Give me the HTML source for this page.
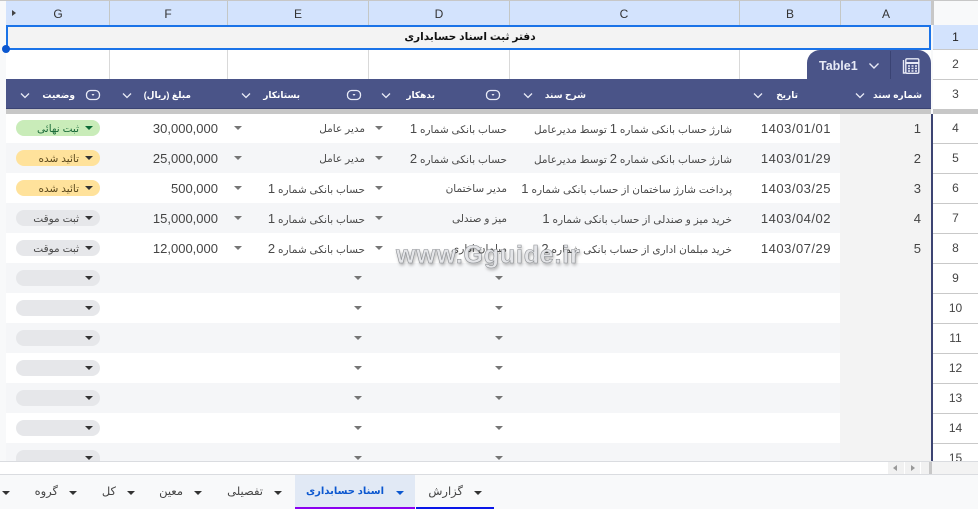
<!DOCTYPE html>
<html lang="fa"><head><meta charset="utf-8"><title>دفتر ثبت اسناد حسابداری</title>
<style>
html,body{margin:0;padding:0;background:#fff}
#p{position:relative;width:978px;height:509px;overflow:hidden;background:#fff;font-family:"Liberation Sans","DejaVu Sans",sans-serif;color:#444}
#p div,#p svg{position:absolute}
.b{left:6px;width:834px;height:30px;background:#f5f6f8}
.v{top:25px;width:1px;height:54px;background:#d9d9d9}
.hv{top:1px;width:1px;height:24px;background:#c4c7c5}
.c{top:2px;height:24px;line-height:24px;font-size:12px;color:#333;text-align:center;width:20px}
.rh{left:933px;width:45px;text-align:center;font-size:12px;line-height:20px;color:#444}
.rl{left:933px;width:45px;height:1px;background:#c9c9c9}
.t{font-size:10.5px;line-height:20px;white-space:nowrap;direction:rtl;color:#4a4a4a;margin-top:1px}
.t span{font-size:13px}
.n{font-size:13px;line-height:20px;white-space:nowrap;color:#444;margin-top:.5px}
.d{letter-spacing:.5px}
.h{top:85px;font-size:9px;line-height:20px;font-weight:bold;color:#fff;white-space:nowrap;direction:rtl}
.a{width:0;height:0;border-left:4px solid transparent;border-right:4px solid transparent;border-top:4px solid #757575}
.k{border-top-color:#333}
.chip{left:16px;width:84px;height:16px;border-radius:8px;background:#e6e7ea}
.tb{top:482px;font-size:11.5px;line-height:20px;white-space:nowrap;direction:rtl;color:#444}
</style></head><body><div id="p">
<div style="left:0;top:0;width:978px;height:509px;background:#f8f9fa"></div>
<div style="left:6px;top:114px;width:834px;height:348px;background:#fff"></div>
<div class="b" style="top:143px"></div><div class="b" style="top:203px"></div><div class="b" style="top:263px"></div><div class="b" style="top:323px"></div><div class="b" style="top:383px"></div><div class="b" style="top:443px;height:19px"></div>
<div style="left:840px;top:114px;width:91px;height:348px;background:#f3f3f3"></div>

<div style="left:6px;top:1px;width:925px;height:24px;background:#d3e3fd"></div>
<div style="left:0;top:0;width:978px;height:1px;background:#c7c7c7"></div>
<div style="left:931px;top:1px;width:3px;height:24px;background:#c7c7c7"></div>
<div style="left:934px;top:1px;width:44px;height:24px;background:#f8f9fa"></div>
<div class="hv" style="left:109px"></div><div class="hv" style="left:227px"></div><div class="hv" style="left:368px"></div><div class="hv" style="left:509px"></div><div class="hv" style="left:739px"></div><div class="hv" style="left:840px"></div>
<div style="left:12px;top:10px;width:0;height:0;border-top:3.5px solid transparent;border-bottom:3.5px solid transparent;border-left:4px solid #444"></div>
<div class="c" style="left:48px">G</div><div class="c" style="left:158px">F</div><div class="c" style="left:288px">E</div><div class="c" style="left:429px">D</div><div class="c" style="left:614px">C</div><div class="c" style="left:780px">B</div><div class="c" style="left:876px">A</div>

<div style="left:6px;top:25px;width:925px;height:25px;background:#f3f3f3"></div>
<div style="left:6px;top:50px;width:925px;height:29px;background:#fff"></div>
<div class="v" style="left:109px;top:50px;height:29px"></div><div class="v" style="left:227px;top:50px;height:29px"></div><div class="v" style="left:368px;top:50px;height:29px"></div><div class="v" style="left:509px;top:50px;height:29px"></div><div class="v" style="left:739px;top:50px;height:29px"></div>
<div style="left:6px;top:25px;width:921px;height:21px;border:2px solid #1a73e8;background:transparent"></div>
<div dir="rtl" style="left:7.5px;width:925px;top:27px;text-align:center;font-size:10.6px;line-height:20px;font-weight:bold;color:#111">دفتر ثبت اسناد حسابداری</div>

<div style="left:807px;top:50px;width:124px;height:30px;background:#4a5488;border-radius:13px 13px 0 0"></div>
<div style="left:890px;top:51px;width:1px;height:28px;background:#3a4373"></div>
<div style="left:819px;top:56px;font-size:12.5px;line-height:20px;font-weight:bold;color:#e8eaf6">Table1</div>
<svg style="left:868px;top:62px" width="12" height="8" viewBox="0 0 12 8"><path d="M1.5 1.5 6 6l4.500-4.500" fill="none" stroke="#e8eaf6" stroke-width="1.400"/></svg>
<svg style="left:902px;top:57px" width="18" height="18" viewBox="0 0 18 18" fill="none" stroke="#e8eaf6"><path d="M1.500 3v13h2" stroke-width="1.400"/><rect x="3.800" y="1.800" width="13" height="14.500" rx="1.200" stroke-width="1.400"/><path d="M4 6h12.500" stroke-width="2"/><path d="M6 9h2M9.500 9h2M13 9h2M6 11.500h2M9.500 11.500h2M13 11.500h2M6 14h2M9.500 14h2M13 14h2" stroke-width="1.400"/></svg>

<div style="left:6px;top:79px;width:925px;height:30px;background:#4a5488;box-shadow:inset 0 -1px 0 #3a4373"></div>
<div style="left:6px;top:109px;width:925px;height:5px;background:#c7c7c7"></div>
<div class="h" style="right:903px">وضعیت</div>
<div class="h" style="right:787px">مبلغ (ریال)</div>
<div class="h" style="right:678px">بستانکار</div>
<div class="h" style="right:543px">بدهکار</div>
<div class="h" style="right:392px">شرح سند</div>
<div class="h" style="right:180px">تاریخ</div>
<div class="h" style="right:56px">شماره سند</div>
<svg style="left:0;top:79px" width="931" height="30" viewBox="0 0 931 30" fill="none" stroke="#e8eaf6" stroke-width="1.300">
<path d="M21 14.500l4 4 4-4M123 14.500l4 4 4-4M242 14.500l4 4 4-4M382 14.500l4 4 4-4M524 14.500l4 4 4-4M754 14.500l4 4 4-4M856 14.500l4 4 4-4"/>
<rect x="86.500" y="11.500" width="13" height="9" rx="4"/><rect x="347.500" y="11.500" width="13" height="9" rx="4"/><rect x="486.500" y="11.500" width="13" height="9" rx="4"/>
<path d="M91.500 15h3l-1.500 2zM352.500 15h3l-1.500 2zM491.500 15h3l-1.500 2z" fill="#e8eaf6" stroke="none"/>
</svg>

<div style="left:931px;top:114px;width:2px;height:348px;background:#3c4472"></div>
<div style="left:933px;top:25px;width:45px;height:25px;background:#d3e3fd"></div>
<div style="left:933px;top:50px;width:45px;height:412px;background:#fff"></div>
<div class="rl" style="top:49px"></div><div class="rl" style="top:79px"></div><div class="rl" style="top:109px;height:5px;background:#c7c7c7"></div>
<div class="rl" style="top:143px"></div><div class="rl" style="top:173px"></div><div class="rl" style="top:203px"></div><div class="rl" style="top:233px"></div><div class="rl" style="top:263px"></div><div class="rl" style="top:293px"></div><div class="rl" style="top:323px"></div><div class="rl" style="top:353px"></div><div class="rl" style="top:383px"></div><div class="rl" style="top:413px"></div><div class="rl" style="top:443px"></div>
<div class="rh" style="top:27px;color:#222">1</div><div class="rh" style="top:54px">2</div><div class="rh" style="top:84px">3</div><div class="rh" style="top:118px">4</div><div class="rh" style="top:148px">5</div><div class="rh" style="top:178px">6</div><div class="rh" style="top:208px">7</div><div class="rh" style="top:238px">8</div><div class="rh" style="top:268px">9</div><div class="rh" style="top:298px">10</div><div class="rh" style="top:328px">11</div><div class="rh" style="top:358px">12</div><div class="rh" style="top:388px">13</div><div class="rh" style="top:418px">14</div><div class="rh" style="top:448px">15</div>

<div class="n" style="right:57px;top:118px">1</div><div class="n" style="right:57px;top:148px">2</div><div class="n" style="right:57px;top:178px">3</div><div class="n" style="right:57px;top:208px">4</div><div class="n" style="right:57px;top:238px">5</div>
<div class="n d" style="right:147px;top:118px">1403/01/01</div><div class="n d" style="right:147px;top:148px">1403/01/29</div><div class="n d" style="right:147px;top:178px">1403/03/25</div><div class="n d" style="right:147px;top:208px">1403/04/02</div><div class="n d" style="right:147px;top:238px">1403/07/29</div>
<div class="t" style="right:246px;top:118px">شارژ حساب بانکی شماره <span>1</span> توسط مدیر‌عامل</div>
<div class="t" style="right:246px;top:148px">شارژ حساب بانکی شماره <span>2</span> توسط مدیر‌عامل</div>
<div class="t" style="right:246px;top:178px">پرداخت شارژ ساختمان از حساب بانکی شماره <span>1</span></div>
<div class="t" style="right:246px;top:208px">خرید میز و صندلی از حساب بانکی شماره <span>1</span></div>
<div class="t" style="right:246px;top:238px">خرید مبلمان اداری از حساب بانکی شماره <span>2</span></div>
<div class="t" style="right:471px;top:118px">حساب بانکی شماره <span>1</span></div>
<div class="t" style="right:471px;top:148px">حساب بانکی شماره <span>2</span></div>
<div class="t" style="right:471px;top:178px">مدیر ساختمان</div>
<div class="t" style="right:471px;top:208px">میز و صندلی</div>
<div class="t" style="right:471px;top:238px">مبلمان اداری</div>
<div class="t" style="right:613px;top:118px">مدیر عامل</div>
<div class="t" style="right:613px;top:148px">مدیر عامل</div>
<div class="t" style="right:613px;top:178px">حساب بانکی شماره <span>1</span></div>
<div class="t" style="right:613px;top:208px">حساب بانکی شماره <span>1</span></div>
<div class="t" style="right:613px;top:238px">حساب بانکی شماره <span>2</span></div>
<div class="n" style="right:760px;top:118px">30,000,000</div><div class="n" style="right:760px;top:148px">25,000,000</div><div class="n" style="right:760px;top:178px">500,000</div><div class="n" style="right:760px;top:208px">15,000,000</div><div class="n" style="right:760px;top:238px">12,000,000</div>

<div class="a" style="left:234px;top:126px"></div><div class="a" style="left:234px;top:156px"></div><div class="a" style="left:234px;top:186px"></div><div class="a" style="left:234px;top:216px"></div><div class="a" style="left:234px;top:246px"></div>
<div class="a" style="left:375px;top:126px"></div><div class="a" style="left:375px;top:156px"></div><div class="a" style="left:375px;top:186px"></div><div class="a" style="left:375px;top:216px"></div><div class="a" style="left:375px;top:246px"></div>
<div class="a" style="left:354px;top:276px"></div><div class="a" style="left:354px;top:306px"></div><div class="a" style="left:354px;top:336px"></div><div class="a" style="left:354px;top:366px"></div><div class="a" style="left:354px;top:396px"></div><div class="a" style="left:354px;top:426px"></div><div class="a" style="left:354px;top:456px"></div>
<div class="a" style="left:495px;top:276px"></div><div class="a" style="left:495px;top:306px"></div><div class="a" style="left:495px;top:336px"></div><div class="a" style="left:495px;top:366px"></div><div class="a" style="left:495px;top:396px"></div><div class="a" style="left:495px;top:426px"></div><div class="a" style="left:495px;top:456px"></div>

<div class="chip" style="top:120px;background:#c9ecb9"></div><div class="chip" style="top:150px;background:#ffe29b"></div><div class="chip" style="top:180px;background:#ffe29b"></div><div class="chip" style="top:210px"></div><div class="chip" style="top:240px"></div><div class="chip" style="top:270px"></div><div class="chip" style="top:300px"></div><div class="chip" style="top:330px"></div><div class="chip" style="top:360px"></div><div class="chip" style="top:390px"></div><div class="chip" style="top:420px"></div><div class="chip" style="top:450px;height:12px;border-radius:8px 8px 0 0"></div>
<div class="t" style="right:899px;top:118px;color:#1b6b3a">ثبت نهائی</div><div class="t" style="right:899px;top:148px;color:#5c4a1e">تائید شده</div><div class="t" style="right:899px;top:178px;color:#5c4a1e">تائید شده</div><div class="t" style="right:899px;top:208px">ثبت موقت</div><div class="t" style="right:899px;top:238px">ثبت موقت</div>
<div class="a" style="left:85px;top:126px;border-top-color:#0b6b35"></div><div class="a k" style="left:85px;top:156px"></div><div class="a k" style="left:85px;top:186px"></div><div class="a k" style="left:85px;top:216px"></div><div class="a k" style="left:85px;top:246px"></div><div class="a k" style="left:85px;top:276px"></div><div class="a k" style="left:85px;top:306px"></div><div class="a k" style="left:85px;top:336px"></div><div class="a k" style="left:85px;top:366px"></div><div class="a k" style="left:85px;top:396px"></div><div class="a k" style="left:85px;top:426px"></div><div class="a k" style="left:85px;top:456px"></div>

<div style="left:2px;top:45px;width:8px;height:8px;border-radius:50%;background:#0b57d0"></div>
<div style="left:396px;top:240px;font-size:25px;line-height:30px;font-weight:bold;letter-spacing:.8px;color:#e4e5e8;-webkit-text-stroke:.6px #8f9296;text-shadow:1px 2px 3px rgba(0,0,0,.35);white-space:nowrap">www.Gguide.ir</div>

<div style="left:0;top:462px;width:978px;height:13px;background:#fff"></div>
<div style="left:0;top:461px;width:978px;height:1px;background:#dadce0"></div>
<div style="left:888px;top:462px;width:44px;height:12px;background:#f1f1f1"></div>
<div style="left:904px;top:462px;width:1px;height:12px;background:#fff"></div><div style="left:920px;top:462px;width:1px;height:12px;background:#fff"></div>
<div style="left:893px;top:465px;width:0;height:0;border-top:3.500px solid transparent;border-bottom:3.500px solid transparent;border-right:4px solid #999"></div>
<div style="left:911px;top:465px;width:0;height:0;border-top:3.500px solid transparent;border-bottom:3.500px solid transparent;border-left:4px solid #999"></div>
<div style="left:929px;top:462px;width:3px;height:12px;background:#c7c7c7"></div>
<div style="left:932px;top:462px;width:46px;height:12px;background:#f3f3f3"></div>

<div style="left:0;top:474px;width:978px;height:35px;background:#f8f9fa;border-top:1px solid #dadce0;box-sizing:border-box"></div>
<div style="left:295px;top:475px;width:120px;height:34px;background:#e1e9f5"></div>
<div style="left:295px;top:507px;width:120px;height:2px;background:#8a00f0"></div>
<div style="left:416px;top:507px;width:78px;height:2px;background:#0a16e8"></div>
<div class="tb" style="right:515px">گزارش</div>
<div class="tb" style="right:594px;font-weight:bold;color:#0b57d0;font-size:10px">اسناد حسابداری</div>
<div class="tb" style="right:715px">تفصیلی</div>
<div class="tb" style="right:795px">معین</div>
<div class="tb" style="right:862px">کل</div>
<div class="tb" style="right:920px">گروه</div>
<div class="a" style="left:474px;top:491px;border-top-color:#333"></div><div class="a" style="left:396px;top:491px;border-top-color:#0b57d0"></div><div class="a" style="left:274px;top:491px;border-top-color:#333"></div><div class="a" style="left:194px;top:491px;border-top-color:#333"></div><div class="a" style="left:127px;top:491px;border-top-color:#333"></div><div class="a" style="left:69px;top:491px;border-top-color:#333"></div><div class="a" style="left:2px;top:491px;border-top-color:#333"></div>
</div></body></html>
